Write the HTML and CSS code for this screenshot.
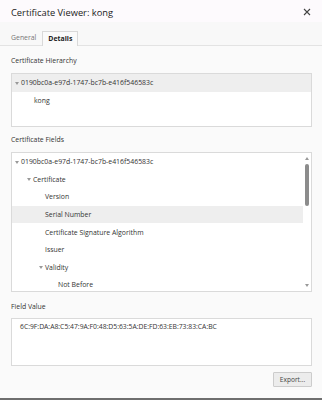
FILE: index.html
```html
<!DOCTYPE html>
<html>
<head>
<meta charset="utf-8">
<link rel="stylesheet" href="styles.css">
</head>
<body>
<div class="dialog">
  <div class="titlebar">
    <span class="title">Certificate Viewer: kong</span>
    <svg class="close" width="8" height="8" viewBox="0 0 8 8"><path d="M1 1L7 7M7 1L1 7" stroke="#444" stroke-width="1.1"/></svg>
  </div>
  <div class="tabs">
    <span class="tab">General</span>
    <span class="tab active">Details</span>
  </div>
  <div class="content">
    <div class="label first">Certificate Hierarchy</div>
    <div class="box hier">
      <div class="row sel"><span class="tri"></span><span>0190bc0a-e97d-1747-bc7b-e416f546583c</span></div>
      <div class="row l1"><span class="leaf"></span><span>kong</span></div>
    </div>
    <div class="label">Certificate Fields</div>
    <div class="box fields">
      <div class="tree">
        <div class="row"><span class="tri"></span><span>0190bc0a-e97d-1747-bc7b-e416f546583c</span></div>
        <div class="row l1"><span class="tri"></span><span>Certificate</span></div>
        <div class="row l2"><span class="leaf"></span><span>Version</span></div>
        <div class="row l2 hl"><span class="leaf"></span><span>Serial Number</span></div>
        <div class="row l2"><span class="leaf"></span><span>Certificate Signature Algorithm</span></div>
        <div class="row l2"><span class="leaf"></span><span>Issuer</span></div>
        <div class="row l2"><span class="tri"></span><span>Validity</span></div>
        <div class="row l3"><span class="leaf"></span><span>Not Before</span></div>
      </div>
      <div class="scrollbar">
        <span class="arrow up"></span>
        <span class="thumb"></span>
        <span class="arrow down"></span>
      </div>
    </div>
    <div class="label">Field Value</div>
    <div class="box value">6C:9F:DA:A8:C5:47:9A:F0:48:D5:63:5A:DE:FD:63:EB:73:83:CA:BC</div>
    <div class="actions"><button class="btn">Export...</button></div>
  </div>
  <div class="bottom"></div>
</div>
</body>
</html>
```

FILE: styles.css
```css
html, body {
  margin: 0;
  padding: 0;
  background: #fafafa;
}
body {
  width: 322px;
  height: 400px;
  overflow: hidden;
  font-family: "Open Sans", "Noto Sans", sans-serif;
  font-size: 6.9px;
  color: #333;
}
.dialog {
  display: flex;
  flex-direction: column;
  height: 400px;
}
.titlebar {
  height: 22px;
  background: #fdfafd;
  display: flex;
  align-items: center;
  justify-content: space-between;
  padding: 2px 11px 0 11px;
  box-sizing: border-box;
}
.title {
  font-size: 9.3px;
  color: #222;
}
.tabs {
  height: 24px;
  box-sizing: border-box;
  background: #f8f8f8;
  border-bottom: 1px solid #e3e3e3;
  display: flex;
  align-items: flex-end;
  padding-left: 11px;
}
.tab {
  height: 14px;
  line-height: 13px;
  color: #777;
  margin-right: 6px;
}
.tab.active {
  color: #222;
  font-weight: bold;
  background: #fafafa;
  border: 1px solid #d9d9d9;
  border-bottom: none;
  padding: 0 5px;
  margin-bottom: -1px;
}
.content {
  flex: 1;
  display: flex;
  flex-direction: column;
  padding: 0 10px 0 11px;
}
.label {
  color: #333;
  height: 12px;
  line-height: 12px;
}
.label.first {
  margin-top: 9px;
}
.box {
  background: #fff;
  border: 1px solid #dadada;
  box-sizing: border-box;
}
.hier {
  height: 54px;
  margin-top: 6px;
  margin-bottom: 7px;
}
.row {
  height: 17.6px;
  display: flex;
  align-items: center;
  padding-left: 3px;
  white-space: nowrap;
}
.row.sel {
  background: #eeeeee;
}
.row.l1 { padding-left: 15px; }
.row.l2 { padding-left: 27px; }
.row.l3 { padding-left: 40px; }
.hier .row.l1 { padding-left: 16px; height: 18px; }
.tri, .leaf {
  width: 6px;
  display: inline-flex;
  justify-content: flex-start;
}
.tri::before {
  content: "";
  border-left: 2px solid transparent;
  border-right: 2px solid transparent;
  border-top: 3px solid #999;
  margin-top: 1px;
}
.fields {
  height: 140px;
  display: flex;
  margin-top: 6px;
  margin-bottom: 9px;
}
.tree {
  flex: 1;
}
.row.hl {
  background: #eeeeee;
}
.scrollbar {
  width: 8px;
  display: flex;
  flex-direction: column;
  align-items: center;
}
.arrow {
  width: 0;
  height: 0;
  border-left: 2.5px solid transparent;
  border-right: 2.5px solid transparent;
}
.arrow.up {
  border-bottom: 3px solid #999;
  margin-top: 4px;
}
.arrow.down {
  border-top: 3px solid #999;
  margin-top: auto;
  margin-bottom: 4px;
}
.thumb {
  width: 4px;
  height: 42px;
  background: #8c8c8c;
  border-radius: 2px;
  margin-top: 4px;
}
.value {
  height: 48px;
  margin-top: 5px;
  padding: 3px 0 0 8px;
  font-size: 6.8px;
}
.actions {
  display: flex;
  justify-content: flex-end;
  margin-top: 6px;
}
.btn {
  font-family: inherit;
  font-size: 6.6px;
  color: #444;
  width: 39px;
  height: 15px;
  padding: 0;
  background: #ececec;
  border: 1px solid #cccccc;
  border-radius: 1px;
}
.bottom {
  height: 2px;
  background: #6e6e6e;
}
```
